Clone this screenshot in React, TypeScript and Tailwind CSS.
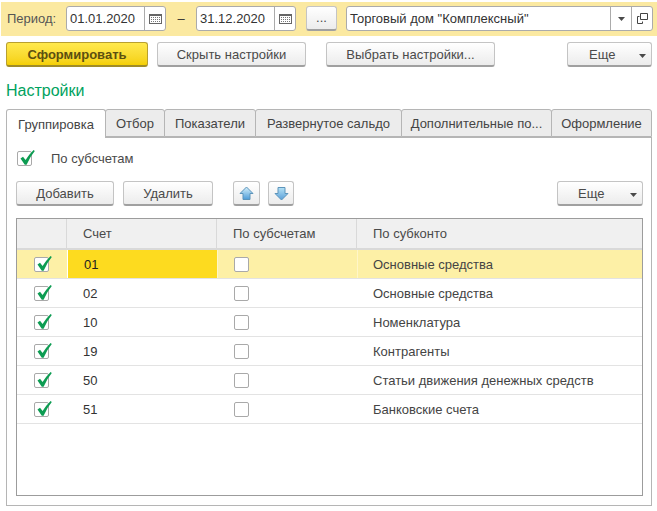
import React from "react";

function Btn({ w, children, className = "" }: { w: string; children?: React.ReactNode; className?: string }) {
  return (
    <div className={`${w} ${className} h-[25px] pt-[2px] shrink-0 rounded-[3px] border border-[#c4c4c4] border-b-[#a0a0a0] border-b-2 bg-gradient-to-b from-white to-[#ececec] flex items-center justify-center text-[#4a4a4a]`}>
      {children}
    </div>
  );
}

function Caret() {
  return (
    <svg width="7" height="4" viewBox="0 0 7 4" className="shrink-0"><path d="M0 0h7L3.5 4z" fill="#4a4a4a" /></svg>
  );
}

function More({ w, pad }: { w: string; pad: string }) {
  return (
    <div className={`${w} h-[25px] pt-[2px] shrink-0 rounded-[3px] border border-[#c4c4c4] border-b-[#a0a0a0] border-b-2 bg-gradient-to-b from-white to-[#ececec] flex items-center text-[#4a4a4a] relative`}>
      <span className={pad}>Еще</span>
      <span className="absolute right-[5px] top-[11px] flex"><Caret /></span>
    </div>
  );
}

function Calendar() {
  return (
    <svg width="13" height="10" viewBox="0 0 13 10">
      <rect x="0.5" y="0.5" width="12" height="9" fill="#fff" stroke="#666" />
      <rect x="0" y="0" width="13" height="2" fill="#666" />
      {[2, 4, 6, 8, 10].map((x) => [3, 5, 7].map((y) => <rect key={x + "-" + y} x={x} y={y} width="1" height="1" fill="#777" />))}
    </svg>
  );
}

function DateField({ value }: { value: string }) {
  return (
    <div className="w-[100px] h-[25px] shrink-0 rounded-[3px] border border-[#ababab] bg-white flex items-center">
      <span className="pl-[3px] flex-1 text-[13px] text-[#333]">{value}</span>
      <span className="w-[21px] h-full border-l border-[#ababab] flex items-center justify-center"><Calendar /></span>
    </div>
  );
}

function Check() {
  return (
    <svg width="18" height="18" viewBox="0 0 18 18" className="absolute left-0 -top-[3px]">
      <path d="M2.5 9.5 L5 7.8 L7.6 11 Q10.5 6 15.6 1 L16.8 2 Q11.8 8 8.6 15.8 L6.8 15.8 Z" fill="#0d9c52" />
    </svg>
  );
}

function Box({ checked, size = "w-[15px] h-[15px]" }: { checked?: boolean; size?: string }) {
  return (
    <div className={`${size} relative shrink-0 rounded-[2px] border border-[#a9a9a9] bg-white`}>
      {checked && <Check />}
    </div>
  );
}

function Arrow({ down }: { down?: boolean }) {
  return (
    <svg width="15" height="15" viewBox="0 0 15 15" className={down ? "rotate-180 -mt-[2px]" : "-mt-[2px]"}>
      <defs>
        <linearGradient id={down ? "ad" : "au"} x1="0" y1="0" x2="0" y2="1">
          <stop offset="0" stopColor={down ? "#5a9fd8" : "#d5f0fb"} />
          <stop offset="1" stopColor={down ? "#b5e2f6" : "#4d9cd8"} />
        </linearGradient>
      </defs>
      <path d="M7.5 1 L14 7.5 L11 7.5 L11 13.5 L4 13.5 L4 7.5 L1 7.5 Z" fill={`url(#${down ? "ad" : "au"})`} stroke="#5c94bb" strokeWidth="1" strokeLinejoin="round" />
    </svg>
  );
}

const rows = [
  ["01", "Основные средства"],
  ["02", "Основные средства"],
  ["10", "Номенклатура"],
  ["19", "Контрагенты"],
  ["50", "Статьи движения денежных средств"],
  ["51", "Банковские счета"],
];

const tabs = [
  ["w-[60px]", "Отбор"],
  ["w-[92px]", "Показатели"],
  ["w-[147px]", "Развернутое сальдо"],
  ["w-[151px]", "Дополнительные по..."],
  ["w-[101px]", "Оформление"],
];

export default function App() {
  return (
    <div className="w-[657px] h-[511px] overflow-hidden bg-white text-[13px] text-[#4a4a4a] font-['Liberation_Sans',Arial,sans-serif]">
      <div className="mt-[2px] ml-[1px] h-[34px] bg-[#fbe9a1] flex items-center pb-[1px]">
        <span className="ml-[6px] w-[59px] text-[13px] text-[#555]">Период:</span>
        <DateField value="01.01.2020" />
        <span className="w-[30px] text-center text-[13px] text-[#333]">–</span>
        <DateField value="31.12.2020" />
        <Btn w="w-[31px] ml-[10px]"><span className="text-[13px] -mt-[2px]">...</span></Btn>
        <div className="ml-[9px] w-[307px] h-[25px] rounded-[3px] border border-[#ababab] bg-white flex items-center">
          <span className="pl-[3px] flex-1 text-[13px] text-[#333]">Торговый дом "Комплексный"</span>
          <span className="w-[21px] h-full border-l border-[#ababab] flex items-center justify-center"><Caret /></span>
          <span className="w-[21px] h-full border-l border-[#ababab] flex items-center justify-center">
            <svg width="11" height="11" viewBox="0 0 11 11" fill="none" stroke="#444"><path d="M3.5 0.5h7v6h-7z" /><path d="M2.5 3.5h-2v7h5v-2" /></svg>
          </span>
        </div>
      </div>

      <div className="mt-[6px] pl-[6px] flex items-center text-[13px]">
        <div className="w-[142px] h-[25px] pt-[2px] rounded-[3px] border border-[#b8a030] border-b-2 border-b-[#a08c28] bg-gradient-to-b from-[#ffe94d] to-[#f5d000] flex items-center justify-center font-bold text-[#5c4f10]">Сформировать</div>
        <Btn w="w-[149px] ml-[9px]">Скрыть настройки</Btn>
        <Btn w="w-[169px] ml-[20px]">Выбрать настройки...</Btn>
        <More w="w-[85px] ml-[72px]" pad="pl-[21px]" />
      </div>

      <div className="mt-[14px] ml-[6px] h-[20px] flex items-center text-[16px] leading-[20px] text-[#00a25e]">Настройки</div>

      <div className="mt-[8px] ml-[6px] w-[646px] flex h-[29px] text-[13px]">
        <div className="w-[100px] h-[29px] pt-[2px] relative z-10 rounded-t-[3px] border border-b-0 border-[#b5b5b5] bg-white flex items-center justify-center text-[#444]">Группировка</div>
        {tabs.map(([w, t]) => (
          <div key={t} className={`${w} -ml-px h-[28px] pt-[2px] rounded-t-[3px] border border-[#b5b5b5] bg-[#ececec] flex items-center justify-center text-[#444]`}>{t}</div>
        ))}
      </div>

      <div className="ml-[6px] w-[646px] h-[369px] -mt-px border border-[#b5b5b5] px-[9px] pt-[12px]">
        <div className="flex items-center h-[16px] pl-[1px]">
          <Box checked size="w-[15px] h-[15px]" />
          <span className="ml-[19px] mt-[2px] text-[13px]">По субсчетам</span>
        </div>
        <div className="mt-[15px] flex items-center text-[13px]">
          <Btn w="w-[98px]">Добавить</Btn>
          <Btn w="w-[90px] ml-[9px]">Удалить</Btn>
          <Btn w="w-[27px] ml-[20px]"><Arrow /></Btn>
          <Btn w="w-[26px] ml-[8px]"><Arrow down /></Btn>
          <More w="w-[86px] ml-[263px]" pad="pl-[20px]" />
        </div>
        <div className="mt-[12px] w-[627px] h-[278px] border border-[#9c9c9c]">
          <div className="h-[31px] flex bg-[#f0f0f0] border-b-2 border-b-[#d9d9d9]">
            <div className="w-[50px] border-r border-[#d9d9d9]" />
            <div className="w-[150px] pl-[16px] border-r border-[#d9d9d9] flex items-center">Счет</div>
            <div className="w-[140px] pl-[16px] border-r border-[#d9d9d9] flex items-center">По субсчетам</div>
            <div className="flex-1 pl-[16px] flex items-center">По субконто</div>
          </div>
          {rows.map(([code, name], i) => (
            <div key={code} className={`h-[29px] flex border-b border-[#e3e3e3] ${i === 0 ? "bg-[#fdf0a6]" : "bg-white"}`}>
              <div className="w-[50px] flex items-center pl-[17px]"><Box checked /></div>
              <div className={`w-[150px] pl-[16px] pt-[2px] flex items-center ${i === 0 ? "bg-[#fddb1f] border-l border-white text-[#222]" : "text-[#333]"}`}>{code}</div>
              <div className={`w-[140px] flex items-center ${i === 0 ? "pl-[16px] border-l border-[#fff6c8]" : "pl-[17px]"}`}><Box /></div>
              <div className={`flex-1 pt-[2px] flex items-center text-[#444] ${i === 0 ? "pl-[15px] border-l border-[#fff6c8]" : "pl-[16px]"}`}>{name}</div>
            </div>
          ))}
        </div>
      </div>
    </div>
  );
}
